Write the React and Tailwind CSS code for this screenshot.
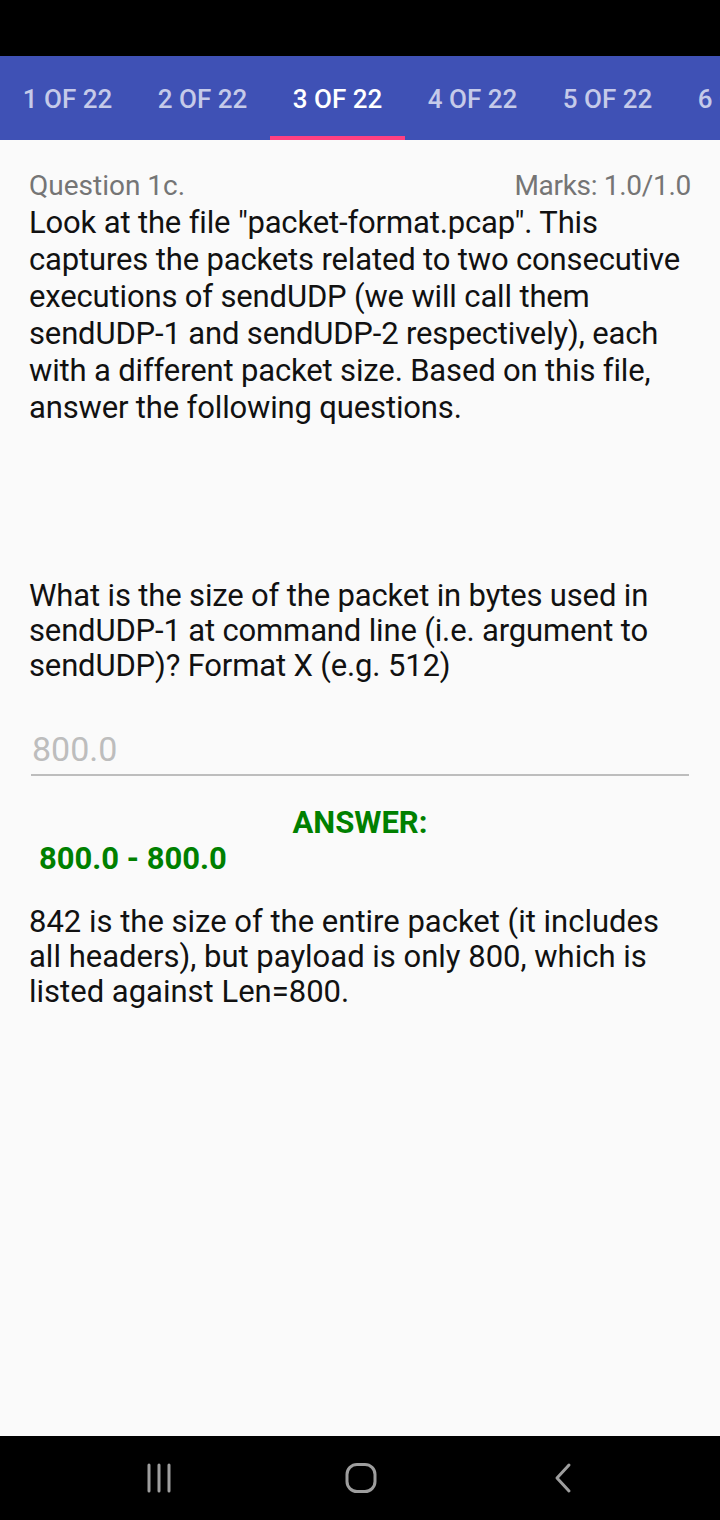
export default function App() {
  const tabs = ["1 OF 22", "2 OF 22", "3 OF 22", "4 OF 22", "5 OF 22", "6 OF 22"];
  return (
    <div className="w-[720px] h-[1520px] flex flex-col bg-[#fafafa] overflow-hidden" style={{ fontFamily: "Roboto, 'Noto Sans', sans-serif" }}>
      <div className="h-[56px] bg-black shrink-0" />
      <div className="h-[84px] bg-[#3f51b5] flex shrink-0 overflow-hidden">
        {tabs.map((t, i) => (
          <div key={t} className="relative w-[135px] shrink-0 flex items-center justify-center pt-[2px]">
            <span className={"text-[26px] font-medium whitespace-nowrap " + (i === 2 ? "text-white" : "text-[#c5cae9]")}>{t}</span>
            {i === 2 && <div className="absolute left-0 right-0 bottom-0 h-[4px] bg-[#ff4081]" />}
          </div>
        ))}
      </div>
      <div className="flex-1 flex flex-col pl-[29px] pr-[29px] pt-[29px]">
        <div className="flex justify-between items-baseline text-[28px] text-[#757575] leading-[34px]">
          <span>Question 1c.</span>
          <span className="tracking-[-0.3px]">Marks: 1.0/1.0</span>
        </div>
        <p className="text-[31px] leading-[37px] text-[#111] mt-[1px] tracking-[-0.15px]">
          Look at the file "packet-format.pcap". This captures the packets related to two consecutive executions of sendUDP (we will call them sendUDP-1 and sendUDP-2 respectively), each with a different packet size. Based on this file, answer the following questions.
        </p>
        <p className="text-[31px] leading-[35px] text-[#111] mt-[152px] tracking-[-0.15px]">
          What is the size of the packet in bytes used in sendUDP-1 at command line (i.e. argument to sendUDP)? Format X (e.g. 512)
        </p>
        <div className="ml-[2px] mr-[2px] mt-[46px] border-b-[2px] border-[#bdbdbd] pb-[5px]">
          <span className="block text-[34px] leading-[40px] text-[#bdbdbd] pl-[1px]">800.0</span>
        </div>
        <div className="text-center text-[31px] font-bold text-[#008000] mt-[29px] leading-[36px]">ANSWER:</div>
        <div className="text-[31px] font-bold text-[#008000] ml-[10px] leading-[36px]">800.0 - 800.0</div>
        <p className="text-[31px] leading-[35px] text-[#111] mt-[27px]">
          842 is the size of the entire packet (it includes all headers), but payload is only 800, which is listed against Len=800.
        </p>
      </div>
      <div className="h-[84px] bg-black shrink-0 flex items-center pl-[145px]">
        <svg width="32" height="32" viewBox="0 0 32 32">
          <g stroke="#9e9e9e" strokeWidth="3" strokeLinecap="round">
            <line x1="4" y1="3" x2="4" y2="29" />
            <line x1="14" y1="3" x2="14" y2="29" />
            <line x1="24" y1="3" x2="24" y2="29" />
          </g>
        </svg>
        <svg width="32" height="32" viewBox="0 0 32 32" className="ml-[168px]">
          <rect x="2" y="2.5" width="28" height="27" rx="10" fill="none" stroke="#9e9e9e" strokeWidth="3" />
        </svg>
        <svg width="24" height="32" viewBox="0 0 24 32" className="ml-[174px]">
          <polyline points="18,3 6,16 18,29" fill="none" stroke="#9e9e9e" strokeWidth="3" strokeLinecap="round" strokeLinejoin="round" />
        </svg>
      </div>
    </div>
  );
}
